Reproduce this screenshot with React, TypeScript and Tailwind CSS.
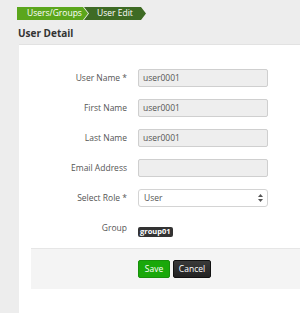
import React from "react";

const font = { fontFamily: '"Open Sans", "Noto Sans", sans-serif' };

function Row({ label, children }: { label: string; children: React.ReactNode }) {
  return (
    <div className="flex h-[18px] items-center">
      <div className="w-[119px] pr-[11px] text-right text-[8.5px] leading-none text-[#555]">{label}</div>
      <div className="w-[130px]">{children}</div>
    </div>
  );
}

function Input({ value }: { value?: string }) {
  return (
    <div className="flex h-[18px] w-[130px] items-center rounded-[2px] border border-[#cfcfcf] bg-[#eeeeee] px-[4px] text-[8.5px] text-[#555]">
      {value}
    </div>
  );
}

export default function App() {
  return (
    <div className="relative h-[313px] w-[300px] overflow-hidden bg-[#ededed]" style={font}>
      <div className="flex pl-[17px] pt-[7px]">
        <div
          className="flex h-[13px] w-[71px] items-center pl-[10px] text-[8.5px] text-white bg-[#5ba61c]"
          style={{ clipPath: "polygon(0 0, calc(100% - 5px) 0, 100% 50%, calc(100% - 5px) 100%, 0 100%)" }}
        >
          Users/Groups
        </div>
        <div
          className="-ml-[4px] flex h-[13px] w-[62px] items-center pl-[13px] text-[8.5px] text-white bg-[#3e6b24]"
          style={{ clipPath: "polygon(0 0, calc(100% - 5px) 0, 100% 50%, calc(100% - 5px) 100%, 0 100%, 5px 50%)" }}
        >
          User Edit
        </div>
      </div>
      <div className="pl-[18px] pt-[6px] text-[10px] font-bold leading-[14px] text-[#333]">User Detail</div>
      <div className="ml-[19px] mt-[4px] h-[300px] border-t border-[#e2e2e2] bg-white pt-[24px]">
        <div className="flex flex-col gap-[12px]">
          <Row label="User Name *"><Input value="user0001" /></Row>
          <Row label="First Name"><Input value="user0001" /></Row>
          <Row label="Last Name"><Input value="user0001" /></Row>
          <Row label="Email Address"><Input /></Row>
          <Row label="Select Role *">
            <div className="flex h-[18px] w-[130px] items-center justify-between rounded-[3px] border border-[#d4d4d4] bg-white pl-[5px] pr-[4px] text-[8.5px] text-[#555]">
              <span>User</span>
              <svg width="5" height="8" viewBox="0 0 5 8">
                <path d="M2.5 0 L5 3 L0 3 Z" fill="#555" />
                <path d="M0 5 L5 5 L2.5 8 Z" fill="#555" />
              </svg>
            </div>
          </Row>
          <Row label="Group">
            <span className="inline-flex h-[10px] items-center rounded-[2px] bg-[#333] px-[2px] text-[7.5px] font-bold leading-none text-white">
              group01
            </span>
          </Row>
        </div>
        <div className="ml-[12px] mt-[11px] flex h-[41px] items-center border-t border-[#e6e6e6] bg-[#f4f4f4] pl-[107px]">
          <button className="h-[18px] w-[32px] rounded-[2px] border border-[#17900a] bg-[#1aa80a] text-[8.5px] text-white">
            Save
          </button>
          <button className="ml-[3px] h-[18px] w-[38px] rounded-[2px] border border-[#111] bg-gradient-to-b from-[#3a3a3a] to-[#222] text-[8.5px] text-white">
            Cancel
          </button>
        </div>
      </div>
    </div>
  );
}
